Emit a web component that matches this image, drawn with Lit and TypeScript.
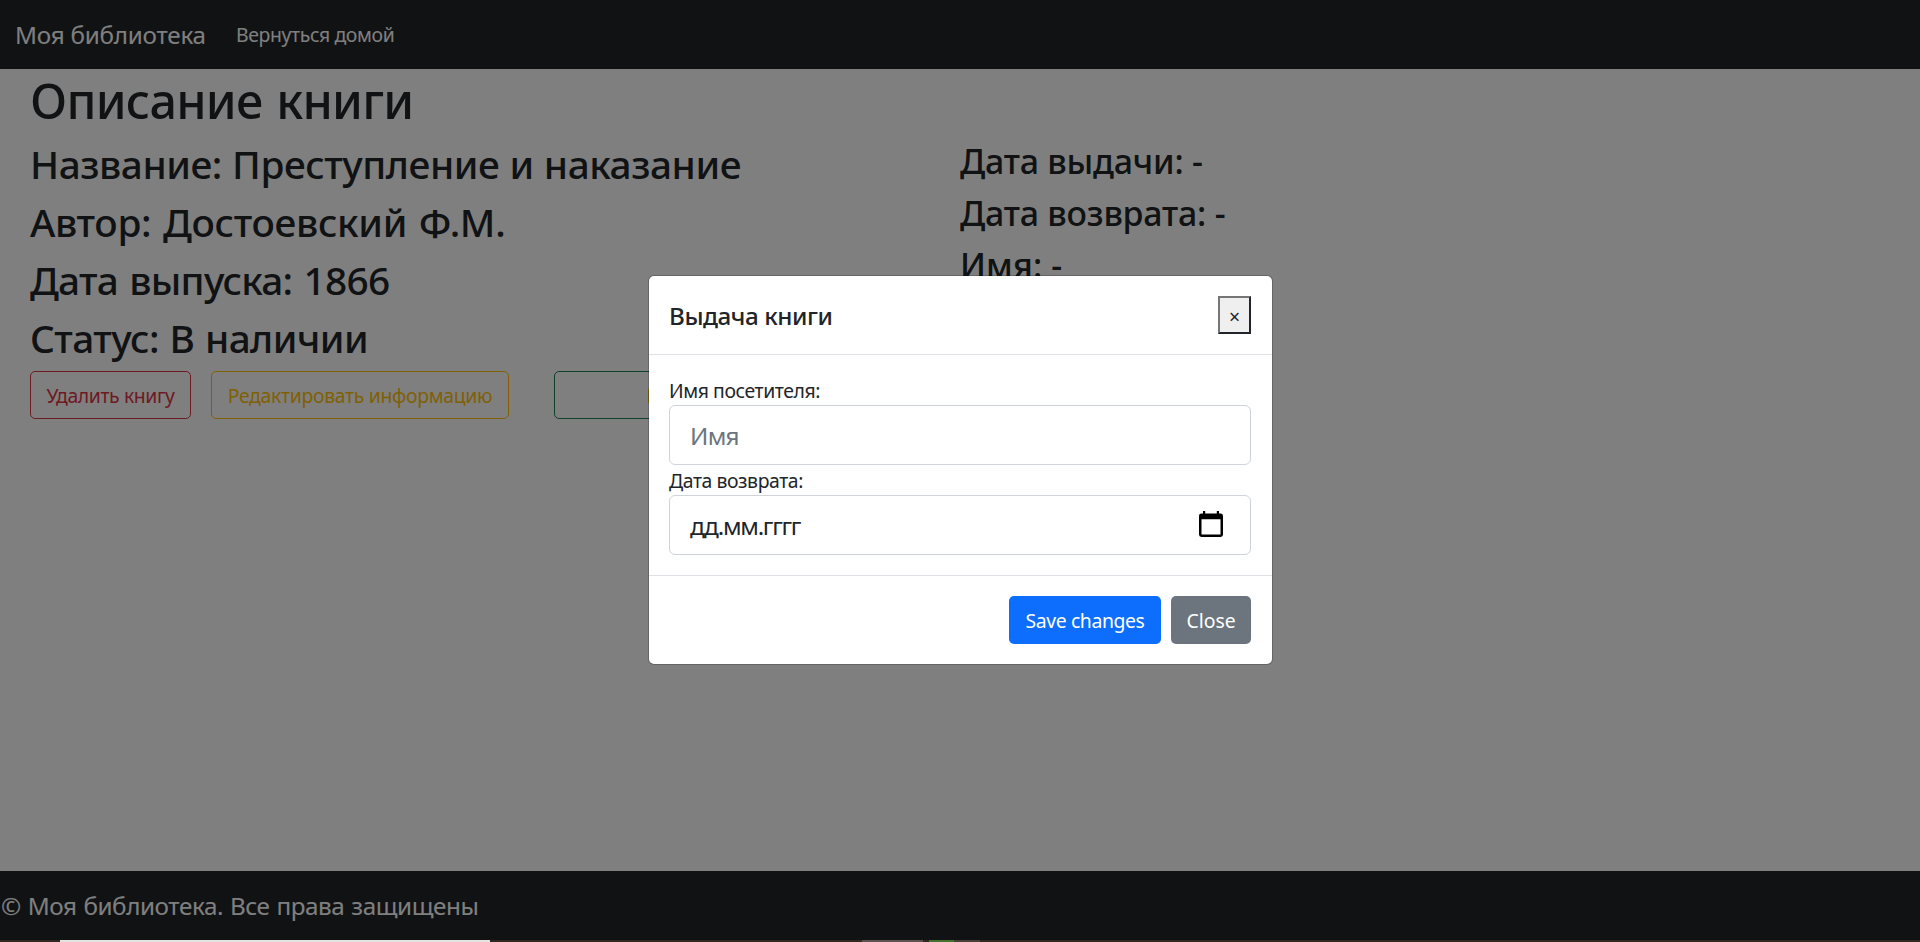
import { LitElement, html, css, svg } from "lit";

const calendar = svg`<path fill="#000" fill-rule="evenodd" d="M4 0h2.2v2.6h11.6V0H20v2.6h1.6Q24 2.600 24 5v18.600Q24 26 21.600 26H2.400Q0 26 0 23.600V5Q0 2.600 2.400 2.600H4zM2.500 8.300v15.200h19V8.300z"/>`;

class AppRoot extends LitElement {
  static styles = css`
    :host {
      display: block;
      --dark: #212529;
      font-family: "Noto Sans", "Open Sans", sans-serif;
      color: var(--dark);
    }
    * { box-sizing: border-box; }
    .page {
      position: relative;
      width: 100%;
      height: 942px;
      display: flex;
      flex-direction: column;
      overflow: hidden;
      background: #fff;
      white-space: nowrap;
    }
    h1, h2, h3, h5, p { margin: 0; font-weight: 500; }
    .nav {
      height: 69px;
      flex: none;
      display: flex;
      align-items: center;
      gap: 30px;
      padding: 0 0 0 15px;
      background: var(--dark);
      color: #fff;
    }
    .brand { width: 191px; font-size: 24.25px; letter-spacing: -0.24px; }
    .link { font-size: 19.4px; letter-spacing: -0.36px; }
    .main { flex: 1; padding: 0 30px; }
    h1 {
      height: 70px;
      padding-top: 1px;
      font-size: 48.5px;
      line-height: 60px;
      letter-spacing: -0.75px;
      word-spacing: 2px;
    }
    .cols { display: grid; grid-template-columns: 1fr 1fr; }
    h2 {
      height: 58px;
      padding-top: 1px;
      font-size: 38.8px;
      line-height: 48px;
      letter-spacing: -0.45px;
      word-spacing: 0.5px;
    }
    h2.author { letter-spacing: -0.32px; word-spacing: 2px; }
    h2.year { letter-spacing: -0.75px; word-spacing: 2px; }
    h2.state { letter-spacing: -0.55px; word-spacing: 1px; }
    h3 {
      height: 52px;
      padding-top: 1px;
      font-size: 33.95px;
      line-height: 42px;
      letter-spacing: -0.22px;
    }
    h3.who { letter-spacing: 0.1px; }
    .actions { display: flex; }
    .btn {
      height: 48px;
      display: flex;
      align-items: center;
      justify-content: center;
      border: 1px solid;
      border-radius: 5px;
      font-size: 19.4px;
    }
    .remove { width: 161px; color: #dc3545; letter-spacing: -0.4px; }
    .edit { width: 298px; margin-left: 20px; color: #ffc107; letter-spacing: -0.31px; }
    .issue {
      width: 312px;
      margin-left: 45px;
      border-color: #198754;
      color: #ffc107;
    }
    .footer {
      height: 69px;
      flex: none;
      padding: 0 0 0 1px;
      background: var(--dark);
      color: #fff;
      font-size: 24.25px;
      line-height: 70px;
      letter-spacing: -0.42px;
      word-spacing: 1px;
    }
    .edge { height: 2px; flex: none; display: flex; position: relative; z-index: 3; background: #32281f; }
    .edge i { display: block; height: 2px; }
    .e1 { margin-left: 60px; width: 430px; background: #e6e2e2; }
    .e2 { margin-left: 372px; width: 61px; background: #5d534e; }
    .e3 { margin-left: 6px; width: 25px; background: #44722f; }
    .e4 { width: 26px; background: #4a403a; }
    .backdrop {
      position: absolute;
      inset: 0;
      z-index: 1;
      background: rgba(0, 0, 0, 0.5);
    }
    .modal {
      position: absolute;
      z-index: 2;
      left: 648px;
      top: 275px;
      width: 625px;
      height: 390px;
      border: 1px solid rgba(0, 0, 0, 0.2);
      border-radius: 6px;
      background: #fff;
      background-clip: padding-box;
    }
    .head {
      height: 79px;
      display: flex;
      align-items: center;
      justify-content: space-between;
      padding: 0 21px 0 20px;
      border-bottom: 1px solid #dee2e6;
    }
    h5 { font-size: 24.25px; letter-spacing: -0.45px; padding-top: 1px; }
    .x {
      width: 33px;
      height: 38px;
      padding: 3px 0 0;
      border: 2px solid;
      border-color: #767676 #212529 #212529 #767676;
      background: #efefef;
      color: var(--dark);
      font: 400 19.4px "Noto Sans", sans-serif;
      line-height: 31px;
      text-align: center;
    }
    .body { height: 221px; padding: 20px 21px 0 20px; border-bottom: 1px solid #dee2e6; }
    label {
      display: block;
      height: 30px;
      line-height: 30px;
      padding-top: 1px;
      font-size: 19.4px;
      letter-spacing: -0.42px;
    }
    .field {
      height: 60px;
      display: flex;
      align-items: center;
      justify-content: space-between;
      padding: 1px 27px 0 20px;
      border: 1px solid #ced4da;
      border-radius: 6px;
      font-size: 24.25px;
    }
    .hint { color: #6c757d; letter-spacing: -0.7px; }
    .date { letter-spacing: -1.3px; }
    .field svg { display: block; width: 24px; height: 26px; margin-top: -4px; }
    .foot { display: flex; justify-content: flex-end; gap: 10px; padding: 20px 21px 0; }
    .foot .btn { border: 0; color: #fff; }
    .save { width: 152px; background: #0d6efd; letter-spacing: -0.38px; }
    .close { width: 80px; background: #6c757d; }
  `;

  render() {
    return html`
      <div class="page">
        <nav class="nav">
          <span class="brand">Моя библиотека</span>
          <span class="link">Вернуться домой</span>
        </nav>
        <main class="main">
          <h1>Описание книги</h1>
          <div class="cols">
            <div>
              <h2>Название: Преступление и наказание</h2>
              <h2 class="author">Автор: Достоевский Ф.М.</h2>
              <h2 class="year">Дата выпуска: 1866</h2>
              <h2 class="state">Статус: В наличии</h2>
            </div>
            <div>
              <h3>Дата выдачи: -</h3>
              <h3>Дата возврата: -</h3>
              <h3 class="who">Имя: -</h3>
            </div>
          </div>
          <div class="actions">
            <div class="btn remove">Удалить книгу</div>
            <div class="btn edit">Редактировать информацию</div>
            <div class="btn issue">Выдать книгу</div>
          </div>
        </main>
        <footer class="footer">© Моя библиотека. Все права защищены</footer>
        <div class="edge">
          <i class="e1"></i><i class="e2"></i><i class="e3"></i><i class="e4"></i>
        </div>
        <div class="backdrop"></div>
        <section class="modal">
          <div class="head">
            <h5>Выдача книги</h5>
            <button class="x">×</button>
          </div>
          <div class="body">
            <label>Имя посетителя:</label>
            <div class="field"><span class="hint">Имя</span></div>
            <label>Дата возврата:</label>
            <div class="field">
              <span class="date">дд.мм.гггг</span>
              <svg viewBox="0 0 24 26">${calendar}</svg>
            </div>
          </div>
          <div class="foot">
            <div class="btn save">Save changes</div>
            <div class="btn close">Close</div>
          </div>
        </section>
      </div>
    `;
  }
}
customElements.define("app-root", AppRoot);
